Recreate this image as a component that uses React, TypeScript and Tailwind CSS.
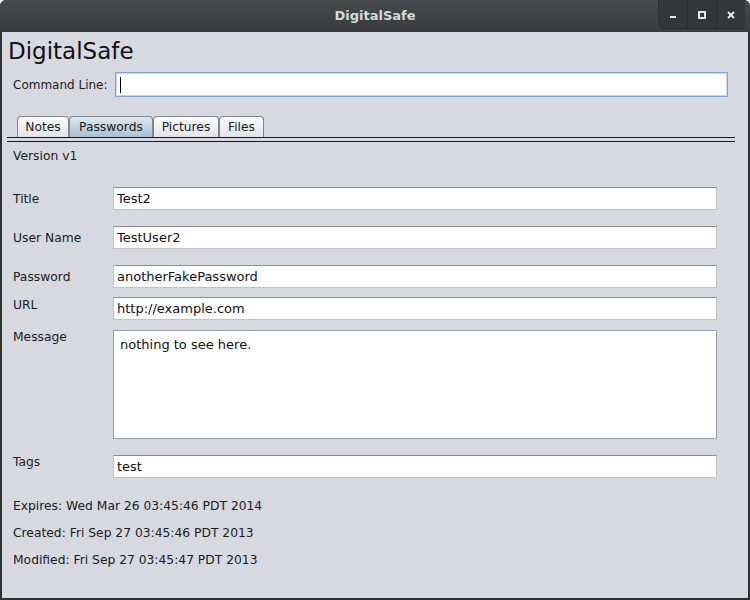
import React from "react";

const font = "font-['DejaVu_Sans',sans-serif]";
const lbl = "text-[12.3px] leading-[14px] text-[#1c1c1c]";

function Field({ label, value, labelShift = "" }: { label: string; value: string; labelShift?: string }) {
  return (
    <div className="flex h-[23px] items-center">
      <div className={`w-[111px] pl-[11px] ${lbl} ${labelShift}`}>{label}</div>
      <div className="flex h-[23px] w-[604px] items-center border border-[#c2c2c2] border-t-[#8e8e8e] bg-white pl-[3px] text-[13px] leading-[15px] text-[#111]">
        {value}
      </div>
    </div>
  );
}

export default function App() {
  return (
    <div className={`${font} flex h-[600px] w-[750px] flex-col overflow-hidden rounded-t-[6px] bg-[#2d3132]`}>
      {/* Title bar */}
      <div className="relative flex h-[32px] shrink-0 items-center justify-center bg-gradient-to-b from-[#464a4c] to-[#383c3d]">
        <span className="text-[13px] font-bold text-[#d8d9d8]">DigitalSafe</span>
        <div className="absolute right-[5px] top-0 flex h-[29px] items-stretch rounded-bl-[6px] border-b border-l border-[#2a2d2e] bg-[#343738]">
          <div className="flex w-[28px] items-end justify-center pb-[10px]">
            <div className="h-[2px] w-[6px] bg-[#e8e8e8]" />
          </div>
          <div className="w-px bg-[#2a2d2e]" />
          <div className="flex w-[28px] items-center justify-center pt-[1px]">
            <div className="h-[8px] w-[8px] border-2 border-[#e8e8e8]" />
          </div>
          <div className="w-px bg-[#2a2d2e]" />
          <div className="flex w-[28px] items-center justify-center pt-[1px]">
            <svg width="8" height="8" viewBox="0 0 8 8">
              <path d="M1 1 L7 7 M7 1 L1 7" stroke="#e8e8e8" strokeWidth="2" />
            </svg>
          </div>
        </div>
      </div>

      {/* Body */}
      <div className="mx-[2px] mb-[2px] flex flex-1 flex-col bg-[#d6d9e0]">
        <div className="mt-[4px] h-[30px] pl-[6px] text-[23px] leading-[30px] text-[#111]">DigitalSafe</div>

        <div className="mt-[6px] flex h-[25px] items-center">
          <div className="w-[113px] pl-[11px] text-[12px] leading-[14px] text-[#1c1c1c]">Command Line:</div>
          <div className="flex h-[25px] w-[613px] items-center border border-[#7ea6d2] bg-white pl-[4px] shadow-[inset_0_0_0_1px_#c4d6ea]">
            <div className="h-[16px] w-px bg-black" />
          </div>
        </div>

        {/* Tabs */}
        <div className={`mt-[19px] flex h-[21px] pl-[15px] ${lbl}`}>
          <div className="flex w-[52px] items-center justify-center rounded-t-[4px] border border-b-0 border-[#80868e] bg-gradient-to-b from-[#fbfbfc] to-[#e1e4e8]">Notes</div>
          <div className="flex w-[84px] items-center justify-center rounded-t-[4px] border border-b-0 border-[#80868e] bg-gradient-to-b from-[#dfe8f0] to-[#a9bfd3]">Passwords</div>
          <div className="flex w-[66px] items-center justify-center rounded-t-[4px] border border-b-0 border-[#80868e] bg-gradient-to-b from-[#fbfbfc] to-[#e1e4e8]">Pictures</div>
          <div className="flex w-[45px] items-center justify-center rounded-t-[4px] border border-b-0 border-[#80868e] bg-gradient-to-b from-[#fbfbfc] to-[#e1e4e8]">Files</div>
        </div>
        <div className="ml-[5px] h-[5px] w-[728px] border-y border-[#0e1b2f]" />

        {/* Form */}
        <div className={`mt-[7px] h-[14px] pl-[11px] ${lbl}`}>Version v1</div>

        <div className="mt-[24px]">
          <Field label="Title" value="Test2" />
        </div>
        <div className="mt-[16px]">
          <Field label="User Name" value="TestUser2" />
        </div>
        <div className="mt-[16px]">
          <Field label="Password" value="anotherFakePassword" />
        </div>
        <div className="mt-[9px]">
          <Field label="URL" value="http://example.com" labelShift="-mt-[7px]" />
        </div>

        <div className="mt-[10px] flex h-[109px] items-start">
          <div className={`w-[111px] pl-[11px] ${lbl}`}>Message</div>
          <div className="h-[109px] w-[604px] border border-[#9a9ea6] bg-white pl-[6px] pt-[6px] text-[13px] leading-[15px] text-[#111]">
            nothing to see here.
          </div>
        </div>

        <div className="mt-[16px]">
          <Field label="Tags" value="test" labelShift="-mt-[10px]" />
        </div>

        <div className={`mt-[21px] h-[14px] pl-[11px] ${lbl}`}>Expires: Wed Mar 26 03:45:46 PDT 2014</div>
        <div className={`mt-[13px] h-[14px] pl-[11px] ${lbl}`}>Created: Fri Sep 27 03:45:46 PDT 2013</div>
        <div className={`mt-[13px] h-[14px] pl-[11px] ${lbl}`}>Modified: Fri Sep 27 03:45:47 PDT 2013</div>
      </div>
    </div>
  );
}
